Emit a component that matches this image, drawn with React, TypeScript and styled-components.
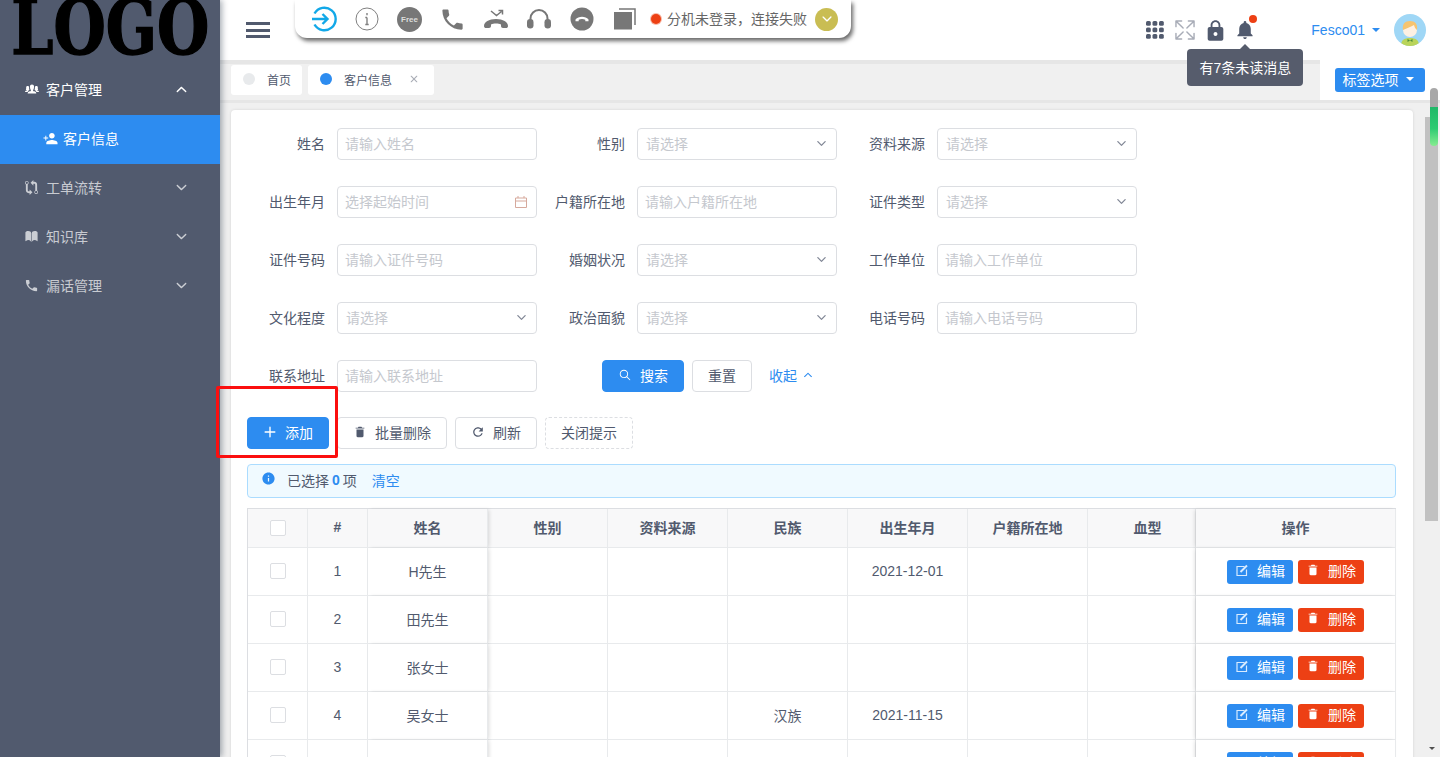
import styled, { createGlobalStyle } from "styled-components";
import {
  IoIosAdd,
  IoIosArrowDown,
  IoIosArrowUp,
  IoIosBook,
  IoIosClose,
  IoIosExpand,
  IoIosPeople,
  IoIosSearch,
  IoMdArrowDropdown,
  IoMdCall,
  IoMdGitCompare,
  IoMdInformationCircle,
  IoMdLock,
  IoMdNotifications,
  IoMdPersonAdd,
  IoMdRefresh,
  IoMdTrash,
} from "react-icons/io";

const GlobalStyle = createGlobalStyle`
  html, body, #root {
    height: 100%;
    margin: 0;
    overflow: hidden;
  }
  body {
    font-family: "Liberation Sans", "Noto Sans CJK SC", sans-serif;
    font-size: 14px;
    color: #515a6e;
  }
  * {
    box-sizing: border-box;
  }
`;

const fields = [
  { label: "姓名", hint: "请输入姓名" },
  { label: "性别", hint: "请选择", select: true },
  { label: "资料来源", hint: "请选择", select: true },
  { label: "出生年月", hint: "选择起始时间", date: true },
  { label: "户籍所在地", hint: "请输入户籍所在地" },
  { label: "证件类型", hint: "请选择", select: true },
  { label: "证件号码", hint: "请输入证件号码" },
  { label: "婚姻状况", hint: "请选择", select: true },
  { label: "工作单位", hint: "请输入工作单位" },
  { label: "文化程度", hint: "请选择", select: true },
  { label: "政治面貌", hint: "请选择", select: true },
  { label: "电话号码", hint: "请输入电话号码" },
  { label: "联系地址", hint: "请输入联系地址" },
];

const columns = ["性别", "资料来源", "民族", "出生年月", "户籍所在地", "血型"];

const rows = [
  { id: 1, name: "H先生", nation: "", birth: "2021-12-01" },
  { id: 2, name: "田先生", nation: "", birth: "" },
  { id: 3, name: "张女士", nation: "", birth: "" },
  { id: 4, name: "吴女士", nation: "汉族", birth: "2021-11-15" },
  { id: 5, name: "", nation: "", birth: "" },
];

function Menu(props: { icon: any; title: string; open?: boolean }) {
  const Arrow = props.open ? IoIosArrowUp : IoIosArrowDown;
  return (
    <MenuRow $open={props.open}>
      <MenuIcon>{props.icon}</MenuIcon>
      <span>{props.title}</span>
      <MenuArrow>
        <Arrow size={15} />
      </MenuArrow>
    </MenuRow>
  );
}

function PhoneBar() {
  return (
    <Phone>
      <Slot>
        <svg width="26" height="26" viewBox="0 0 26 26" fill="none" stroke="#12a8e8" strokeWidth="2.4">
          <path d="M3.500 7.500a11.300 11.300 0 1 1 0 11" />
          <path d="M1 13h15.500M11.500 8l5 5-5 5" />
        </svg>
      </Slot>
      <Slot>
        <svg width="24" height="24" viewBox="0 0 24 24" fill="none" stroke="#808080">
          <circle cx="12" cy="12" r="11" />
          <path d="M12 6v2.200M12 10.500v7M10.300 10.500H12M10.300 17.500h3.400" strokeWidth="1.400" />
        </svg>
      </Slot>
      <Slot>
        <FreeBadge>Free</FreeBadge>
      </Slot>
      <Slot>
        <IoMdCall size={27} color="#777" />
      </Slot>
      <Slot>
        <svg width="26" height="20" viewBox="0 0 26 20" fill="none">
          <path
            d="M1 17c0-4 5-7 12-7s12 3 12 7c0 1.500-1 2-2 2h-3c-1.200 0-2-.8-2-2v-1.500c-1.500-.7-3-1-5-1s-3.500.3-5 1V17c0 1.200-.8 2-2 2H3c-1 0-2-.5-2-2z"
            fill="#777"
          />
          <path d="M8 2l5.500 4.500 5-4M15.500 1.500h4v4" stroke="#777" strokeWidth="1.500" />
        </svg>
      </Slot>
      <Slot>
        <svg width="26" height="20" viewBox="0 0 26 20" fill="none">
          <path d="M4.500 12v-2.500a8.500 8.500 0 0 1 17 0V12" stroke="#777" strokeWidth="2" />
          <rect x="1" y="10" width="6.500" height="9.500" rx="3.200" fill="#777" />
          <rect x="18.500" y="10" width="6.500" height="9.500" rx="3.200" fill="#777" />
        </svg>
      </Slot>
      <Slot>
        <svg width="24" height="24" viewBox="0 0 24 24">
          <circle cx="12" cy="12" r="11.500" fill="#777" />
          <path
            d="M5.500 12.500c1.500-2 4-2.800 6.500-2.800s5 .8 6.500 2.800v1.800h-3.200v-1.500c-1-.6-2.100-.8-3.300-.8s-2.300.2-3.300.8v1.500H5.500z"
            fill="#fff"
          />
        </svg>
      </Slot>
      <Slot>
        <svg width="22" height="22" viewBox="0 0 22 22">
          <path d="M5 1h16v16" fill="none" stroke="#777" strokeWidth="1.500" />
          <rect x="0" y="4" width="18" height="17.500" fill="#777" />
        </svg>
      </Slot>
      <StatusDot />
      <StatusText>分机未登录，连接失败</StatusText>
      <GoldToggle>
        <IoIosArrowDown size={14} color="#fff" />
      </GoldToggle>
    </Phone>
  );
}

function Avatar() {
  return (
    <svg width="32" height="32" viewBox="0 0 32 32" aria-hidden="true">
      <clipPath id="avatar-clip">
        <circle cx="16" cy="16" r="16" />
      </clipPath>
      <g clipPath="url(#avatar-clip)">
        <rect width="32" height="32" fill="#9fd7f6" />
        <path d="M7 32c0-6 3-8 9-8s9 2 9 8z" fill="#b9d45a" />
        <circle cx="16" cy="16" r="7" fill="#fdf0e3" />
        <path d="M9 16c-1-6 2-9 7-9s8 3 7 9c-1.500-1-2.500-3-3-5-3 2-7 3-11 5z" fill="#f6c46f" />
        <path d="M13.500 25l2.500 1.500 2.500-1.500v3L16 26.500 13.500 28z" fill="#4f8f3a" />
      </g>
    </svg>
  );
}

export default function App() {
  return (
    <Page>
      <GlobalStyle />
      <Sidebar>
        <LogoBox>
          <LogoText>LOGO</LogoText>
        </LogoBox>
        <Menu icon={<IoIosPeople size={16} />} title="客户管理" open />
        <SubItem>
          <IoMdPersonAdd size={15} />
          <span>客户信息</span>
        </SubItem>
        <Menu icon={<IoMdGitCompare size={15} />} title="工单流转" />
        <Menu icon={<IoIosBook size={15} />} title="知识库" />
        <Menu icon={<IoMdCall size={15} />} title="漏话管理" />
      </Sidebar>

      <Main>
        <Header>
          <Burger>
            <i />
            <i />
            <i />
          </Burger>
          <PhoneBar />
          <HeaderRight>
            <HeadIcon>
              <svg width="18" height="18" viewBox="0 0 18 18" fill="currentColor">
                {[0, 6.500, 13].map((y) =>
                  [0, 6.500, 13].map((x) => (
                    <rect key={`${x}-${y}`} x={x} y={y} width="4.800" height="4.800" rx="1.500" />
                  )),
                )}
              </svg>
            </HeadIcon>
            <HeadIcon $faint>
              <IoIosExpand size={26} />
            </HeadIcon>
            <HeadIcon>
              <IoMdLock size={25} />
            </HeadIcon>
            <HeadIcon>
              <IoMdNotifications size={22} />
              <BellDot />
              <Tooltip>有7条未读消息</Tooltip>
            </HeadIcon>
            <UserName>
              Fesco01
              <IoMdArrowDropdown size={16} />
            </UserName>
            <AvatarBox>
              <Avatar />
            </AvatarBox>
          </HeaderRight>
        </Header>

        <TabBar>
          <Tabs>
            <Tab>
              <TabDot />
              首页
            </Tab>
            <Tab>
              <TabDot $active />
              客户信息
              <TabClose>
                <IoIosClose size={18} />
              </TabClose>
            </Tab>
          </Tabs>
          <TabOptions>
            <TabOptionsButton>
              标签选项
              <IoMdArrowDropdown size={16} />
            </TabOptionsButton>
          </TabOptions>
        </TabBar>

        <Content>
          <Card>
            <Form>
              {fields.map((f) => (
                <Field key={f.label}>
                  <Label>{f.label}</Label>
                  {f.select ? (
                    <Select>
                      <span>{f.hint}</span>
                      <IoIosArrowDown size={13} color="#808695" />
                    </Select>
                  ) : (
                    <InputBox>
                      <Input placeholder={f.hint} readOnly />
                      {f.date && (
                        <svg width="14" height="14" viewBox="0 0 14 14" fill="none" stroke="#d6a99c">
                          <path d="M1.500 3h11v9.500h-11zM1.500 6h11M4 1v2M10 1v2" />
                        </svg>
                      )}
                    </InputBox>
                  )}
                </Field>
              ))}
              <FormActions>
                <Button $primary>
                  <IoIosSearch size={14} />
                  搜索
                </Button>
                <Button>重置</Button>
                <Collapse>
                  收起
                  <IoIosArrowUp size={12} />
                </Collapse>
              </FormActions>
            </Form>

            <ToolRow>
              <Button $primary>
                <AddIcon>
                  <IoIosAdd size={22} />
                </AddIcon>
                添加
              </Button>
              <Button>
                <IoMdTrash size={14} />
                批量删除
              </Button>
              <Button>
                <IoMdRefresh size={14} />
                刷新
              </Button>
              <Button $dashed>关闭提示</Button>
            </ToolRow>

            <Notice>
              <NoticeIcon>
                <IoMdInformationCircle size={15} />
              </NoticeIcon>
              已选择 <strong>0</strong> 项<ClearLink>清空</ClearLink>
            </Notice>

            <Table>
              <colgroup>
                <col width={60} />
                <col width={60} />
                <col width={120} />
                <col width={120} />
                <col width={120} />
                <col width={120} />
                <col width={120} />
                <col width={120} />
                <col width={108} />
                <col width={200} />
              </colgroup>
              <thead>
                <tr>
                  <Th>
                    <Check />
                  </Th>
                  <Th>#</Th>
                  <Th $edge="left">姓名</Th>
                  {columns.map((c) => (
                    <Th key={c} $tucked={c === "血型"}>
                      {c}
                    </Th>
                  ))}
                  <Th $edge="right">操作</Th>
                </tr>
              </thead>
              <tbody>
                {rows.map((r) => (
                  <tr key={r.id}>
                    <Td>
                      <Check />
                    </Td>
                    <Td>{r.id}</Td>
                    <Td $edge="left">{r.name}</Td>
                    <Td />
                    <Td />
                    <Td>{r.nation}</Td>
                    <Td>{r.birth}</Td>
                    <Td />
                    <Td />
                    <Td $edge="right">
                      <Actions>
                        <RowButton>
                          <svg width="14" height="14" viewBox="0 0 14 14" fill="none" stroke="#d8ebff">
                            <path d="M9.500 3.500h-7.500v9h9.500V6.500" strokeWidth="1.200" />
                            <path d="M5.500 9l6.500-6.500" strokeWidth="2" />
                          </svg>
                          编辑
                        </RowButton>
                        <RowButton $danger>
                          <IoMdTrash size={14} />
                          删除
                        </RowButton>
                      </Actions>
                    </Td>
                  </tr>
                ))}
              </tbody>
            </Table>
          </Card>
          <ScrollThumb />
          <ScrollDown />
        </Content>
      </Main>

      <RedFrame />
      <PhonePill />
    </Page>
  );
}

const Page = styled.div`
  position: relative;
  display: flex;
  height: 100%;
  overflow: hidden;
  background: #f0f0f0;
`;

const Sidebar = styled.aside`
  position: relative;
  z-index: 3;
  width: 220px;
  flex: none;
  background: #515a6e;
  box-shadow: 2px 0 6px rgba(0, 21, 41, 0.35);
`;

const LogoBox = styled.div`
  height: 66px;
  display: flex;
  justify-content: center;
`;

const LogoText = styled.div`
  font-family: "DejaVu Serif", serif;
  font-weight: 700;
  font-size: 76px;
  line-height: 56px;
  height: 56px;
  color: #000;
  -webkit-text-stroke: 1.500px #000;
  transform: scaleX(0.79);
  margin-left: 1px;
`;

const MenuRow = styled.div<{ $open?: boolean }>`
  height: 49px;
  display: flex;
  align-items: center;
  padding: 0 0 3px 24px;
  color: ${(p) => (p.$open ? "#fff" : "rgba(255, 255, 255, 0.7)")};
`;

const MenuIcon = styled.span`
  width: 22px;
  display: flex;
`;

const MenuArrow = styled.span`
  margin-left: auto;
  margin-right: 31px;
  display: flex;
`;

const SubItem = styled.div`
  height: 49px;
  display: flex;
  align-items: center;
  gap: 5px;
  padding: 0 0 3px 43px;
  background: #2d8cf0;
  color: #fff;
`;

const Main = styled.div`
  flex: 1;
  min-width: 0;
  display: flex;
  flex-direction: column;
`;

const Header = styled.header`
  position: relative;
  z-index: 2;
  height: 60px;
  flex: none;
  display: flex;
  background: #fff;
`;

const Burger = styled.div`
  width: 24px;
  margin: 22px 0 0 26px;
  display: flex;
  flex-direction: column;
  gap: 3.5px;

  i {
    display: block;
    height: 3px;
    background: #515a6e;
  }
`;

const Phone = styled.div`
  width: 556px;
  height: 38px;
  margin-left: 25px;
  padding-left: 7px;
  display: flex;
  align-items: center;
  background: #fff;
  border-radius: 0 0 12px 12px;
  box-shadow: 2px 3px 4px rgba(0, 0, 0, 0.6);
`;

const Slot = styled.div`
  width: 43px;
  flex: none;
  display: flex;
  justify-content: center;
`;

const FreeBadge = styled.div`
  width: 25px;
  height: 25px;
  border-radius: 50%;
  background: #777;
  color: #ddd;
  font-size: 8px;
  font-weight: 700;
  display: flex;
  align-items: center;
  justify-content: center;
`;

const StatusDot = styled.span`
  width: 10px;
  height: 10px;
  margin-left: 5px;
  border-radius: 50%;
  background: #ed4014;
  box-shadow: 0 0 0 1px #f9b9a6;
`;

const StatusText = styled.span`
  margin-left: 6px;
  padding-bottom: 2px;
  color: #666;
  white-space: nowrap;
`;

const GoldToggle = styled.span`
  width: 23px;
  height: 23px;
  margin-left: 8px;
  border-radius: 50%;
  background: #c9bd53;
  display: flex;
  align-items: center;
  justify-content: center;
`;

const HeaderRight = styled.div`
  margin-left: auto;
  padding-right: 14px;
  display: flex;
  align-items: center;
  height: 60px;
`;

const HeadIcon = styled.span<{ $faint?: boolean }>`
  position: relative;
  width: 30px;
  display: flex;
  justify-content: center;
  color: ${(p) => (p.$faint ? "#a8acb7" : "#515a6e")};
`;

const BellDot = styled.i`
  position: absolute;
  top: -4px;
  right: 3px;
  width: 8px;
  height: 8px;
  border-radius: 50%;
  background: #ed4014;
`;

const Tooltip = styled.div`
  position: absolute;
  top: 30px;
  left: 50%;
  transform: translateX(-50%);
  height: 37px;
  width: 116px;
  padding-bottom: 2px;
  display: flex;
  align-items: center;
  justify-content: center;
  background: #565c6c;
  color: #fff;
  border-radius: 4px;
  white-space: nowrap;

  &::before {
    content: "";
    position: absolute;
    top: -5px;
    left: 50%;
    margin-left: -5px;
    border: 5px solid transparent;
    border-top: 0;
    border-bottom-color: #565c6c;
  }
`;

const UserName = styled.span`
  margin-left: 51px;
  display: flex;
  align-items: center;
  gap: 3px;
  color: #2d8cf0;
`;

const AvatarBox = styled.span`
  margin-left: 10px;
  height: 32px;
  display: flex;
`;

const TabBar = styled.div`
  height: 40px;
  flex: none;
  display: flex;
  border-top: 4px solid #e6e6e6;
  background: #f0f0f0;
`;

const Tabs = styled.div`
  flex: 1;
  display: flex;
  gap: 6px;
  padding: 1px 0 0 11px;
`;

const Tab = styled.div`
  height: 30px;
  padding: 0 11px 2px 12px;
  display: flex;
  align-items: center;
  background: #fff;
  border-radius: 3px;
  font-size: 12px;
`;

const TabDot = styled.i<{ $active?: boolean }>`
  width: 12px;
  height: 12px;
  margin-right: 12px;
  border-radius: 50%;
  background: ${(p) => (p.$active ? "#2d8cf0" : "#e8eaec")};
`;

const TabClose = styled.span`
  margin-left: 13px;
  display: flex;
  color: #a9adb6;
`;

const TabOptions = styled.div`
  width: 120px;
  margin-top: -4px;
  padding: 8px 0 0 15px;
  background: #fff;
`;

const TabOptionsButton = styled.div`
  width: 90px;
  height: 24px;
  padding-bottom: 2px;
  display: flex;
  align-items: center;
  justify-content: center;
  gap: 3px;
  background: #2d8cf0;
  color: #fff;
  border-radius: 3px;
`;

const Content = styled.div`
  position: relative;
  flex: 1;
  min-height: 0;
  overflow: hidden;
  padding: 7px 27px 0 11px;
  border-top: 3px solid #e6e6e6;
`;

const Card = styled.main`
  padding: 18px 17px 20px 16px;
  background: #fff;
  border-radius: 4px;
  box-shadow: 0 0 3px rgba(0, 0, 0, 0.12);
`;

const Form = styled.div`
  margin-left: -10px;
  display: grid;
  grid-template-columns: repeat(3, 300px);
  row-gap: 26px;
`;

const Field = styled.div`
  display: flex;
  align-items: center;
`;

const Label = styled.label`
  width: 88px;
  margin-right: 12px;
  padding-bottom: 2px;
  text-align: right;
  white-space: nowrap;
`;

const InputBox = styled.div`
  width: 200px;
  height: 32px;
  padding: 0 8px 0 7px;
  display: flex;
  align-items: center;
  border: 1px solid #dcdee2;
  border-radius: 4px;
  background: #fff;
`;

const Input = styled.input`
  flex: 1;
  min-width: 0;
  padding: 0;
  border: 0;
  outline: 0;
  font: inherit;
  color: #515a6e;

  &::placeholder {
    color: #c5c8ce;
  }
`;

const Select = styled(InputBox)`
  padding: 0 8px 2px;
  justify-content: space-between;
  color: #c5c8ce;
`;

const FormActions = styled.div`
  grid-column: span 2;
  display: flex;
  align-items: center;
  gap: 8px;
  padding-left: 65px;
`;

const Button = styled.button<{ $primary?: boolean; $dashed?: boolean }>`
  height: 32px;
  padding: 0 15px 2px;
  display: inline-flex;
  align-items: center;
  gap: 8px;
  font: inherit;
  color: ${(p) => (p.$primary ? "#fff" : "#515a6e")};
  background: ${(p) => (p.$primary ? "#2d8cf0" : "#fff")};
  border: 1px ${(p) => (p.$dashed ? "dashed" : "solid")}
    ${(p) => (p.$primary ? "#2d8cf0" : "#dcdee2")};
  border-radius: 4px;
`;

const AddIcon = styled.span`
  display: flex;
  margin: 0 -4px;
`;

const Collapse = styled.span`
  margin-left: 9px;
  padding-bottom: 2px;
  display: inline-flex;
  align-items: center;
  gap: 5px;
  color: #2d8cf0;
`;

const ToolRow = styled.div`
  margin-top: 25px;
  display: flex;
  gap: 8px;
`;

const Notice = styled.div`
  height: 34px;
  margin-top: 15px;
  padding: 0 0 2px 13px;
  display: flex;
  align-items: center;
  gap: 3px;
  background: #f0faff;
  border: 1px solid #abdcff;
  border-radius: 4px;

  strong {
    color: #2d8cf0;
  }
`;

const NoticeIcon = styled.span`
  display: flex;
  margin: -4px 8px 0 0;
  color: #2d8cf0;
`;

const ClearLink = styled.span`
  margin-left: 12px;
  color: #2d8cf0;
`;

const Table = styled.table`
  width: 1149px;
  margin-top: 10px;
  table-layout: fixed;
  border-collapse: separate;
  border-spacing: 0;
  border-top: 1px solid #dcdee2;
  border-left: 1px solid #dcdee2;
`;

const edgeShadow = (edge?: string) =>
  edge === "left"
    ? "position: relative; z-index: 1; box-shadow: 2px 0 4px -1px rgba(0, 0, 0, 0.15);"
    : edge === "right"
      ? "position: relative; z-index: 1; box-shadow: -2px 0 4px -1px rgba(0, 0, 0, 0.15);"
      : "";

const Th = styled.th<{ $edge?: string; $tucked?: boolean }>`
  height: 39px;
  padding: 0 0 2px ${(p) => (p.$tucked ? "12px" : "0")};
  text-align: center;
  font-weight: 700;
  background: #f8f8f9;
  border-right: 1px solid #e8eaec;
  border-bottom: 1px solid #e8eaec;
  ${(p) => edgeShadow(p.$edge)}
`;

const Td = styled.td<{ $edge?: string }>`
  height: 48px;
  padding: 0 0 2px;
  text-align: center;
  background: #fff;
  border-right: 1px solid #e8eaec;
  border-bottom: 1px solid #e8eaec;
  ${(p) => edgeShadow(p.$edge)}
`;

const Check = styled.span`
  display: inline-block;
  width: 16px;
  height: 16px;
  vertical-align: middle;
  background: #fff;
  border: 1px solid #dcdee2;
  border-radius: 2px;
`;

const Actions = styled.div`
  padding-top: 2px;
  display: flex;
  justify-content: center;
  gap: 5px;
`;

const RowButton = styled.span<{ $danger?: boolean }>`
  height: 24px;
  padding: 0 8px 3px;
  display: inline-flex;
  align-items: center;
  gap: 8px;
  color: #fff;
  background: ${(p) => (p.$danger ? "#ed4014" : "#2d8cf0")};
  border-radius: 3px;
`;

const ScrollThumb = styled.div`
  position: absolute;
  top: 14px;
  right: 2px;
  width: 13px;
  height: 404px;
  background: #c1c1c1;
`;

const ScrollDown = styled.div`
  position: absolute;
  bottom: 7px;
  right: 5px;
  border: 3.500px solid transparent;
  border-bottom: 0;
  border-top-color: #505050;
`;

const RedFrame = styled.div`
  position: absolute;
  z-index: 4;
  left: 216px;
  top: 386px;
  width: 122px;
  height: 72px;
  border: 3px solid #fb0f0f;
  border-radius: 2px;
`;

const PhonePill = styled.div`
  position: absolute;
  z-index: 4;
  left: 1430px;
  top: 88px;
  width: 8px;
  height: 58px;
  border-radius: 4px;
  background: linear-gradient(
    #a8a8a8 0,
    #a8a8a8 32%,
    #1fb868 33%,
    #2ecb72 70%,
    #86ec90 100%
  );
`;
